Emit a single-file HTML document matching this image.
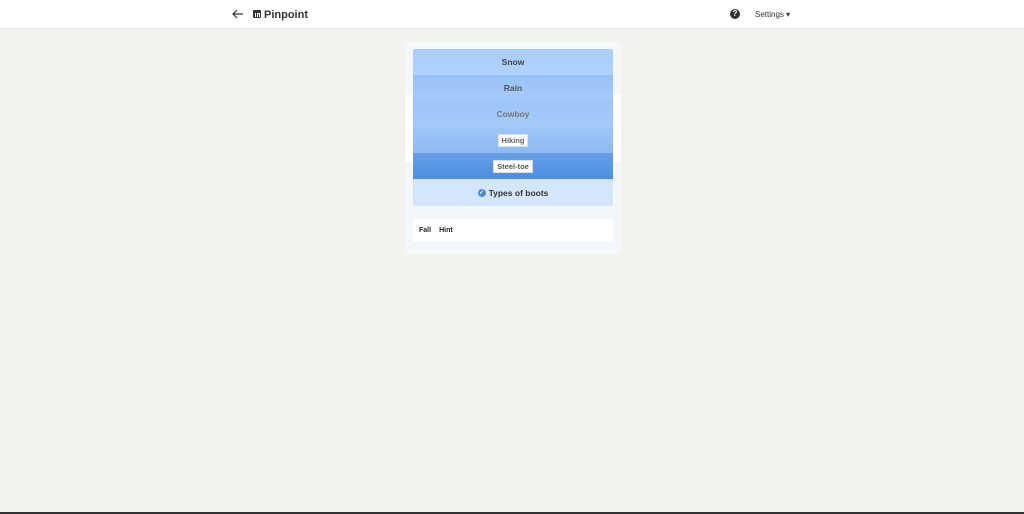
<!DOCTYPE html><html><head><style>
body{margin:0;width:1024px;height:514px;background:#f3f2ee;font-family:"Liberation Sans",sans-serif;position:relative;overflow:hidden}
.hdr{position:absolute;left:0;top:0;width:1024px;height:28px;background:#fff;border-bottom:1px solid #e8e7e3}
.panel{position:absolute;left:405px;top:42px;width:216px;height:212px;background:#f4f7fa;border-radius:3px}
.band{position:absolute;left:405px;top:95px;width:216px;height:67px;background:#fff}
.list{position:absolute;left:413px;top:49px;width:200px;border-radius:2px;overflow:hidden}
.row{height:26px;display:flex;align-items:center;justify-content:center;font-size:8.5px;font-weight:bold;color:#444}
.tag{background:#fff;padding:1px 3px;color:#666;font-size:7.5px;border:1px solid #ddd}
.card{position:absolute;left:413px;top:219px;width:200px;height:23px;background:#fff;border-radius:2px;font-size:7px;font-weight:bold;color:#222;display:flex;align-items:center;padding-left:6px;box-sizing:border-box}
</style></head><body>
<div class="hdr">
<svg style="position:absolute;left:232px;top:9px" width="12" height="10" viewBox="0 0 12 10"><path d="M11 5H1.5M5 1L1 5l4 4" stroke="#333" stroke-width="1.2" fill="none"/></svg>
<div style="position:absolute;left:253px;top:10px;width:8px;height:8px;background:#333;border-radius:1px"><div style="position:absolute;left:1.5px;top:3px;width:1px;height:3.5px;background:#fff"></div><div style="position:absolute;left:3.5px;top:3px;width:3px;height:3.5px;border:1px solid #fff;border-bottom:none;box-sizing:border-box;border-radius:1px 1px 0 0"></div></div>
<div style="position:absolute;left:264px;top:9px;font-size:11px;font-weight:bold;color:#333">Pinpoint</div>
<div style="position:absolute;left:730px;top:9px;width:10px;height:10px;border-radius:50%;background:#333;color:#fff;font-size:8px;font-weight:bold;line-height:10px;text-align:center">?</div>
<div style="position:absolute;left:755px;top:10px;font-size:8px;color:#333">Settings ▾</div>
</div>
<div class="panel"></div><div class="band"></div>
<div class="list">
<div class="row" style="background:linear-gradient(#a8ccfb,#b0d2fc)">Snow</div>
<div class="row" style="background:linear-gradient(#98c2f8,#a5cafa);color:#555">Rain</div>
<div class="row" style="background:linear-gradient(#9cc5f9,#a6cbfa);color:#777">Cowboy</div>
<div class="row" style="background:linear-gradient(#9ec6f8,#8dbaf2)"><span class="tag">Hiking</span></div>
<div class="row" style="background:linear-gradient(#65a0e6,#4b8de0)"><span class="tag" style="color:#555">Steel-toe</span></div>
<div class="row" style="background:#d3e6fc;height:27px;font-size:8.5px;color:#333"><span style="display:inline-block;width:8px;height:8px;border-radius:50%;background:#4a8be0;margin-right:3px;font-size:6px;line-height:8px;color:#fff;text-align:center">✓</span>Types of boots</div>
</div>
<div class="card">Fall<span style="margin-left:8px">Hint</span></div>
<div style="position:absolute;left:0;top:512px;width:1024px;height:2px;background:#333"></div>
</body></html>
